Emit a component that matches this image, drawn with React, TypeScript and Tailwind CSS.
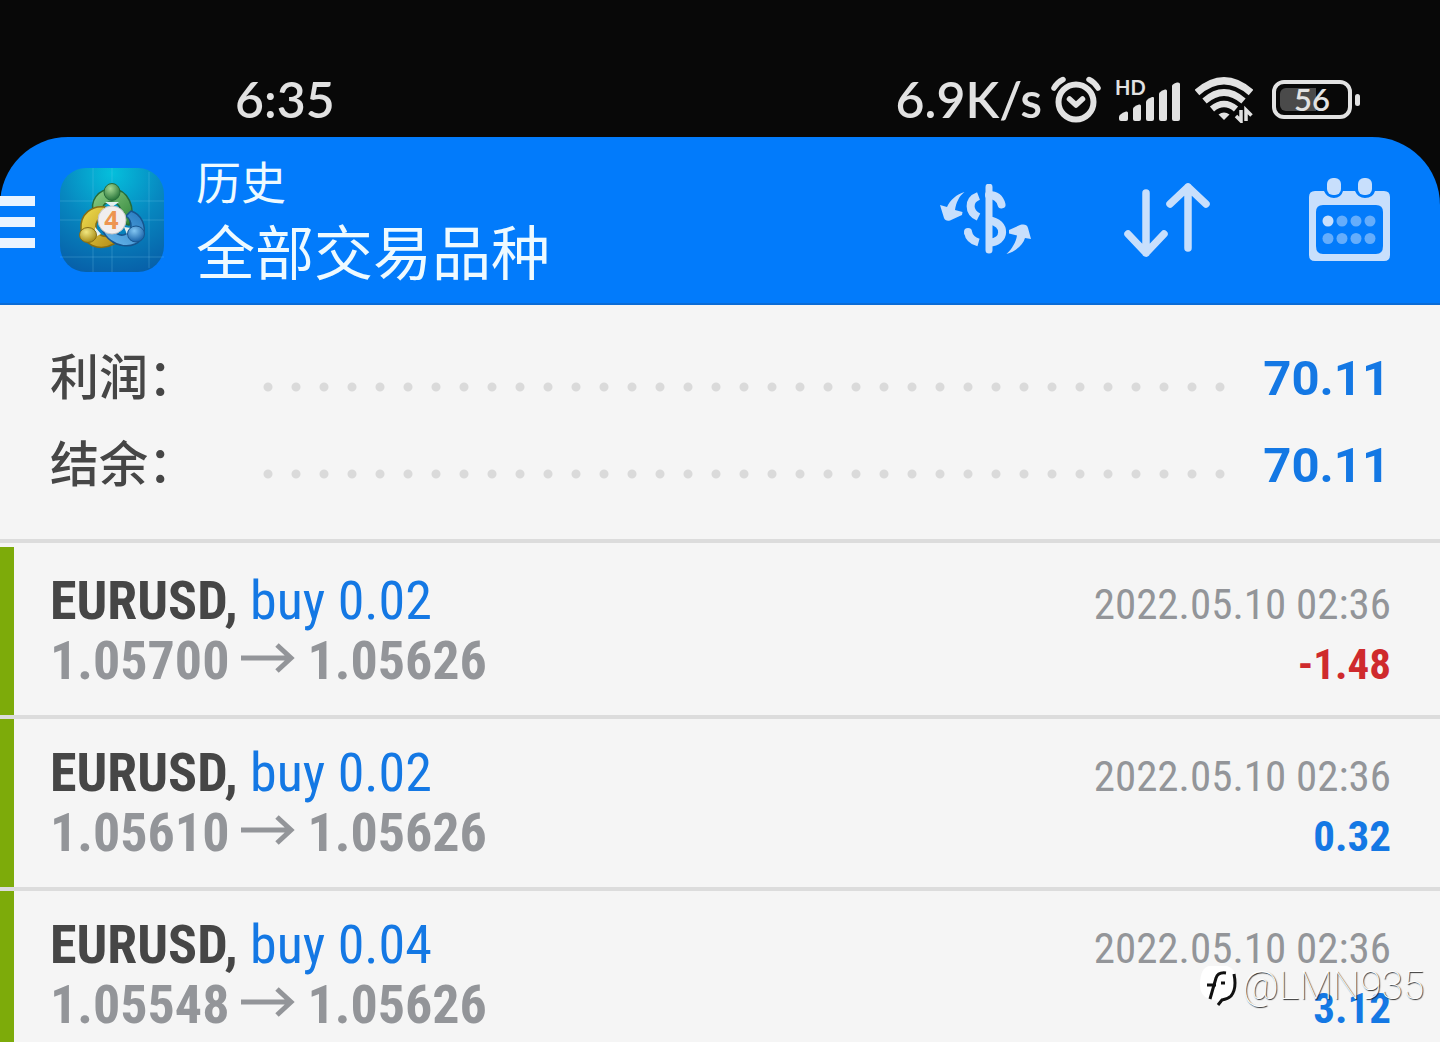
import React from "react";

const SANS = "font-[Roboto,'Noto_Sans_CJK_SC',sans-serif]";
const CONDENSED = "font-['Roboto_Condensed','Liberation_Sans_Narrow',Roboto,sans-serif]";
const STATUS = "font-[Lato,'Open_Sans',sans-serif]";

type Deal = {
  symbol: string;
  side: string;
  open: string;
  close: string;
  time: string;
  profit: string;
  loss?: boolean;
};

const deals: Deal[] = [
  { symbol: "EURUSD,", side: "buy 0.02", open: "1.05700", close: "1.05626", time: "2022.05.10 02:36", profit: "-1.48", loss: true },
  { symbol: "EURUSD,", side: "buy 0.02", open: "1.05610", close: "1.05626", time: "2022.05.10 02:36", profit: "0.32" },
  { symbol: "EURUSD,", side: "buy 0.04", open: "1.05548", close: "1.05626", time: "2022.05.10 02:36", profit: "3.12" },
];

function AlarmIcon() {
  return (
    <svg width="50" height="48" viewBox="0 0 50 48" fill="none" stroke="#e2e2e2" strokeLinecap="round" strokeLinejoin="round">
      <circle cx="25" cy="26" r="17.500" strokeWidth="6" />
      <path d="M3 12 Q6 6.500 12 3.500" strokeWidth="5.500" />
      <path d="M47 12 Q44 6.500 38 3.500" strokeWidth="5.500" />
      <path d="M18.500 23 L25 29 L31.500 23" strokeWidth="5.500" />
    </svg>
  );
}

function SignalIcon() {
  return (
    <svg className="overflow-visible" width="64" height="44" viewBox="0 0 64 44" fill="#e2e2e2">
      <path d="M3 39 Q3 36 10 33.500 Q12 33 12 35 V41 Q12 43 10 43 H5 Q3 43 3 41Z" />
      <path d="M17 31 Q17 28.500 23 26.500 Q25 26 25 28 V41 Q25 43 23 43 H19 Q17 43 17 41Z" />
      <path d="M30 24 Q30 21.500 36 19 Q38 18.500 38 20 V41 Q38 43 36 43 H32 Q30 43 30 41Z" />
      <path d="M43 16 Q43 13.500 49 11.500 Q51 11 51 13 V41 Q51 43 49 43 H45 Q43 43 43 41Z" />
      <path d="M56 8 Q56 6 61 4.500 Q64 4 64 6 V41 Q64 43 62 43 H58 Q56 43 56 41Z" />
      <text x="-1" y="17" fontSize="20" fontWeight="700" fontFamily="Lato, sans-serif">HD</text>
    </svg>
  );
}

function WifiIcon() {
  return (
    <svg width="58" height="46" viewBox="0 0 58 46" fill="none" stroke="#e2e2e2">
      <path d="M2 15.500 Q29 -8 56 15.500" strokeWidth="7" />
      <path d="M9.500 24 Q29 7 48.500 24" strokeWidth="6.500" />
      <path d="M17 32 Q29 22 41 32" strokeWidth="6.500" />
      <path d="M29 43 L23.500 37.500 Q29 33.500 34.500 37.500Z" fill="#e2e2e2" stroke="none" />
      <path d="M46 33 V44 L41 39 M51 44 V33 L56.500 38.500" strokeWidth="3.500" />
    </svg>
  );
}

function BatteryIcon() {
  return (
    <div className="flex items-center gap-[3px]" role="img" aria-label="56">
      <div className="flex h-[39px] w-20 rounded-xl border-4 border-[#e2e2e2] p-1">
        <div className="flex flex-1 items-center justify-center rounded-md bg-[linear-gradient(90deg,#4a4a4a_56%,transparent_56%)] text-[31px] leading-[23px]">
          56
        </div>
      </div>
      <div className="h-3 w-[5px] rounded-sm bg-[#e2e2e2]" />
    </div>
  );
}

function StatusBar() {
  return (
    <div className={`${STATUS} flex items-center justify-between pt-[71px] pr-20 pb-[9px] pl-[235px] text-[50px] leading-[57px] font-semibold text-[#e2e2e2]`}>
      <span>6:35</span>
      <div className="flex items-center">
        <span>6.9K/s</span>
        <div className="ml-[9px] flex items-center gap-[15px]">
          <AlarmIcon />
          <SignalIcon />
          <WifiIcon />
          <div className="ml-1">
            <BatteryIcon />
          </div>
        </div>
      </div>
    </div>
  );
}

function AppLogo() {
  return (
    <svg width="104" height="104" viewBox="0 0 104 104" aria-hidden="true">
      <defs>
        <radialGradient id="tile" cx="0.5" cy="0.05" r="1">
          <stop offset="0" stopColor="#05bfdc" />
          <stop offset="0.5" stopColor="#0788c0" />
          <stop offset="1" stopColor="#075fa8" />
        </radialGradient>
        <linearGradient id="green" x1="0" y1="0" x2="1" y2="1">
          <stop offset="0" stopColor="#8fcf87" />
          <stop offset="1" stopColor="#2f8438" />
        </linearGradient>
        <linearGradient id="gold" x1="0" y1="0" x2="1" y2="1">
          <stop offset="0" stopColor="#f0df50" />
          <stop offset="1" stopColor="#b58d18" />
        </linearGradient>
        <linearGradient id="azure" x1="1" y1="0" x2="0" y2="1">
          <stop offset="0" stopColor="#2477bd" />
          <stop offset="1" stopColor="#6fbdf0" />
        </linearGradient>
        <radialGradient id="greenBall" cx="0.4" cy="0.3" r="0.7">
          <stop offset="0" stopColor="#a4d994" />
          <stop offset="1" stopColor="#27743a" />
        </radialGradient>
        <radialGradient id="goldBall" cx="0.4" cy="0.3" r="0.7">
          <stop offset="0" stopColor="#f2e880" />
          <stop offset="1" stopColor="#a88d18" />
        </radialGradient>
        <radialGradient id="azureBall" cx="0.4" cy="0.3" r="0.7">
          <stop offset="0" stopColor="#83c6f2" />
          <stop offset="1" stopColor="#1862a8" />
        </radialGradient>
      </defs>
      <rect width="104" height="104" rx="26" fill="url(#tile)" />
      <path d="M33 0V104M52 0V104M89 4V100M0 33H104M0 52H104M0 89H104" stroke="#7fd0ee" strokeOpacity="0.250" strokeWidth="1" />
      <path d="M34 46 C29 33 38 21 52 21 C68 21 77 40 69 57 L60 54 C64 44 60 34 51 34 C44 34 41 39 43 46Z" fill="url(#green)" stroke="#266b39" strokeWidth="1.500" />
      <path d="M45 39 C32 37 20 46 21 61 C22 77 39 84 54 76 L50 68 C40 70 35 64 36 56 C37 51 41 49 46 50Z" fill="url(#gold)" stroke="#876e14" strokeWidth="1.500" />
      <path d="M71 43 C81 46 87 58 83 68 C77 83 50 81 42 61 L54 63 C61 71 70 66 71 58 C71 54 69 50 66 48Z" fill="url(#azure)" stroke="#17558e" strokeWidth="1.500" />
      <path d="M45 34 L52 39 L59 34 Z M35 59 V69 L41 66Z M64 59 L71 60 L68 69Z" fill="#e5f1ef" />
      <ellipse cx="52" cy="24" rx="8" ry="8.500" fill="url(#greenBall)" stroke="#266b39" />
      <ellipse cx="28" cy="67" rx="8.500" ry="7.500" fill="url(#goldBall)" stroke="#876e14" />
      <ellipse cx="76" cy="66" rx="8.500" ry="8" fill="url(#azureBall)" stroke="#17558e" />
      <circle cx="52" cy="52" r="14" fill="#f0eeee" stroke="#c5c5c5" />
      <text x="51.500" y="61" textAnchor="middle" fontSize="25" fontWeight="700" fontFamily="Open Sans, sans-serif" fill="#ed9550">4</text>
    </svg>
  );
}

function CurrencyIcon() {
  return (
    <svg width="92" height="72" viewBox="0 0 92 72" fill="none" stroke="#c8dffc">
      <path d="M24.500 8 C17 10 10 16 7 23 L0 21 L4 34 C5 36.500 7 37 10 36.500 L22 31 L22.500 28 L15 26 C16 19 19 12 24.500 8Z" fill="#c8dffc" stroke="none" />
      <path d="M66.500 70 C75 68 83 61 85 54 L91 55 L88 44 C87 40.500 84 40 80 41 L69 46 L69 49.500 L77 51.500 C76 58 72 65 66.500 70Z" fill="#c8dffc" stroke="none" />
      <path d="M49 3 V66" strokeWidth="7" strokeLinecap="round" />
      <path d="M38.500 12 C28 16 28 28 38.500 33" strokeWidth="8" />
      <path d="M28 48 C29 54 33 57 38.500 58.500" strokeWidth="8" />
      <circle cx="28" cy="48" r="4" fill="#c8dffc" stroke="none" />
      <path d="M49 11 C56 11 60 15 61.500 20.500" strokeWidth="8" strokeLinecap="round" />
      <path d="M49 36.500 C67 38 66 59 49 58.500" strokeWidth="8" />
    </svg>
  );
}

function SortIcon() {
  return (
    <svg width="86" height="76" viewBox="0 0 86 76" fill="none" stroke="#c8dffc" strokeWidth="7.500" strokeLinecap="round" strokeLinejoin="round">
      <path d="M22 11 V71 M4 52 L22 71 L40 52" />
      <path d="M64 66 V5 M46 22 L64 5 L82 22" />
    </svg>
  );
}

function CalendarIcon() {
  return (
    <svg width="82" height="84" viewBox="0 0 82 84" fill="#c8dffc">
      <path
        fillRule="evenodd"
        d="M6 13 H15 Q18 20 25 20 Q32 20 34 13 H46 Q49 20 56 20 Q64 20 66 13 H75 Q81 13 81 19 V77 Q81 83 75 83 H6 Q0 83 0 77 V19 Q0 13 6 13Z M14 27 Q7 27 7 34 V68 Q7 76 14 76 H67 Q74 76 74 68 V34 Q74 27 67 27Z"
      />
      <rect x="18" y="0" width="14" height="17" rx="6" />
      <rect x="49" y="0" width="14" height="17" rx="6" />
      <circle cx="19" cy="43" r="5.500" />
      <g fillOpacity="0.500">
        <circle cx="33" cy="43" r="5.500" />
        <circle cx="47" cy="43" r="5.500" />
        <circle cx="61" cy="43" r="5.500" />
        <circle cx="19" cy="60.500" r="5.500" />
        <circle cx="33" cy="60.500" r="5.500" />
        <circle cx="47" cy="60.500" r="5.500" />
        <circle cx="61" cy="60.500" r="5.500" />
      </g>
    </svg>
  );
}

function Header() {
  return (
    <header className="flex items-center rounded-t-[68px] border-b-2 border-[#0b6cd6] bg-[#027bfb] pr-[49px]">
      <button type="button" aria-label="菜单" className="mt-1 flex w-[35px] flex-col gap-[11px]">
        <span className="h-[10px] bg-[#eaf4ff]" />
        <span className="h-[10px] bg-[#eaf4ff]" />
        <span className="h-[10px] bg-[#eaf4ff]" />
      </button>
      <div className="ml-[25px]">
        <AppLogo />
      </div>
      <div className="ml-8 flex-1 pt-[18px] pb-2 text-[#eefaff]">
        <p className="text-[45px] leading-[60px]">历史</p>
        <h1 className="text-[59px] leading-[80px]">全部交易品种</h1>
      </div>
      <div className="flex items-center">
        <button type="button" aria-label="交易品种">
          <CurrencyIcon />
        </button>
        <button type="button" aria-label="排序" className="ml-[92px]">
          <SortIcon />
        </button>
        <button type="button" aria-label="日期" className="ml-[99px]">
          <CalendarIcon />
        </button>
      </div>
    </header>
  );
}

function SummaryLine({ label, value }: { label: string; value: string }) {
  return (
    <div className="flex h-[87px] items-center">
      <dt className="w-[204px] text-[49px] font-medium text-[#464646]">{label}</dt>
      <div
        aria-hidden="true"
        className="mt-4 h-7 flex-1 bg-[radial-gradient(circle_at_center,#dadada_4px,transparent_5px)] bg-size-[28px_28px]"
      />
      <dd className="w-[156px] text-right text-[49px] font-bold text-[#1478e4]">{value}</dd>
    </div>
  );
}

function DealRow({ deal }: { deal: Deal }) {
  return (
    <li className={`${CONDENSED} border-b-4 border-[#dcdcdc]`}>
      <div className="border-l-[14px] border-[#7dab0a] py-6 pr-[49px] pl-9 text-[54px] leading-[60px] whitespace-nowrap">
        <div className="flex h-[60px] items-baseline justify-between">
          <p>
            <span className="font-bold text-[#464646]">{deal.symbol}</span>{" "}
            <span className="text-[#1478e4]">{deal.side}</span>
          </p>
          <time className="text-[43px] text-[#939599]">{deal.time}</time>
        </div>
        <div className="flex h-[60px] items-baseline justify-between font-bold">
          <p className="flex text-[#939599]">
            <span>{deal.open}</span>
            <svg className="mx-3 mt-3" width="54" height="30" viewBox="0 0 54 30" fill="none" stroke="#939599" strokeWidth="5">
              <path d="M0 15 H50 M36 2 L50 15 L36 28" />
            </svg>
            <span>{deal.close}</span>
          </p>
          <span className={deal.loss ? "text-[43px] text-[#cf2a2d]" : "text-[43px] text-[#1478e4]"}>{deal.profit}</span>
        </div>
      </div>
    </li>
  );
}

function Watermark() {
  return (
    <div className="absolute right-4 bottom-8 flex items-center gap-[6px]">
      <svg width="38" height="42" viewBox="0 0 38 42">
        <path d="M10 1 H28 Q37 3 37 16 V23 Q36 32 28 35 L20 41 L19 36 L10 34 Q1 31 1 20 Q1 3 10 1Z" fill="#fff" />
        <path d="M35 9 Q38 24 32 31 Q29 34 23 35 L19 40 M27 8 Q19 7 17 13 L11 34 M8 20 H17 M22 18 H26" fill="none" stroke="#111" strokeWidth="3" />
      </svg>
      <span className="text-[39px] leading-[48px] font-thin text-white [text-shadow:1px_1px_1px_#222]">@LMN935</span>
    </div>
  );
}

export default function App() {
  return (
    <div className={`${SANS} relative h-screen overflow-hidden bg-[#f5f5f5]`}>
      <div className="bg-[#080808]">
        <StatusBar />
        <Header />
      </div>
      <main>
        <dl className="border-b-4 border-[#dcdcdc] pt-[30px] pr-[50px] pb-[30px] pl-[50px]">
          <SummaryLine label="利润：" value="70.11" />
          <SummaryLine label="结余：" value="70.11" />
        </dl>
        <ul className="pt-1">
          {deals.map((deal) => (
            <DealRow key={deal.open} deal={deal} />
          ))}
        </ul>
      </main>
      <Watermark />
    </div>
  );
}
